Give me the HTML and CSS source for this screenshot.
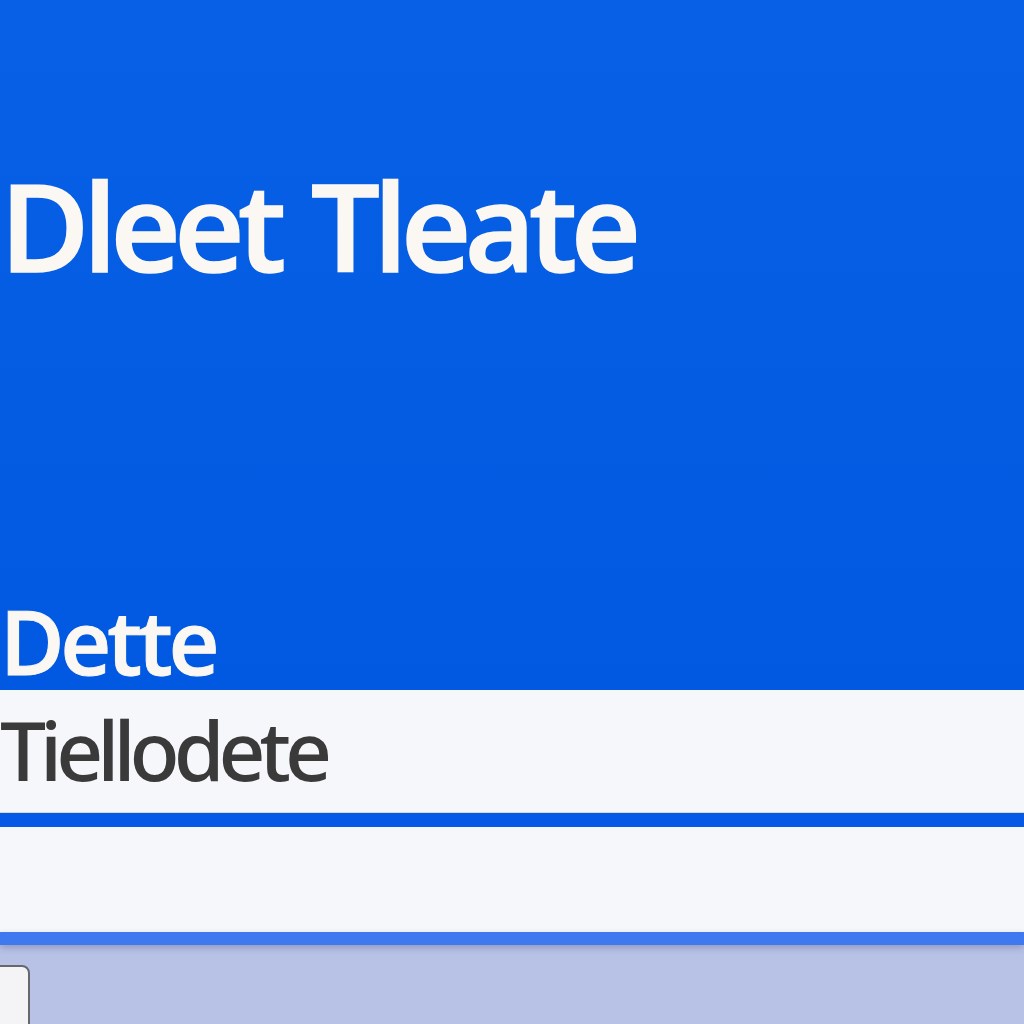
FILE: index.html
```html
<!DOCTYPE html>
<html lang="en">
<head>
  <meta charset="UTF-8" />
  <meta name="viewport" content="width=device-width, initial-scale=1" />
  <title>Dleet Tleate</title>
  <link rel="stylesheet" href="styles.css">
</head>
<body>

  <header class="hero">
    <h1 class="hero-title">Dleet Tleate</h1>
    <h2 class="hero-sub">Dette</h2>
  </header>

  <div class="field">
    <span class="field-text">Tiellodete</span>
  </div>
  <div class="divider"></div>
  <div class="field field-empty"></div>
  <div class="divider divider-light"></div>

  <div class="footer">
    <div class="footer-box"></div>
  </div>

</body>
</html>
```

FILE: styles.css
```css
body {
  font-family: 'Open Sans', 'Noto Sans', sans-serif;
  background: #b8c2e6;
  margin: 0;
  padding: 0;
  height: 1024px;
  overflow: hidden;
}

.hero {
  background: linear-gradient(to bottom, #0760e6, #0259e1);
  color: #fbf8f4;
  height: 690px;
  display: flex;
  flex-direction: column;
  box-sizing: border-box;
}

.hero-title {
  margin: 0;
  padding-top: 145px;
  font-size: 122px;
  font-weight: 600;
  line-height: 160px;
  letter-spacing: -6.5px;
  word-spacing: 6px;
  -webkit-text-stroke: 1.5px currentColor;
}

.hero-sub {
  margin: auto 0 0;
  padding-bottom: 4px;
  font-size: 88px;
  font-weight: 600;
  line-height: 90px;
  letter-spacing: -4px;
  -webkit-text-stroke: 1px currentColor;
}

.field {
  background: #f6f7fb;
  height: 123px;
  display: flex;
  align-items: center;
  border-bottom: 1px solid #d8d8dc;
  box-sizing: border-box;
}

.field-empty {
  height: 105px;
  border-bottom: none;
}

.field-text {
  font-family: 'Noto Sans', sans-serif;
  font-size: 82px;
  font-weight: 500;
  color: #3a3a3a;
  letter-spacing: -6px;
  line-height: 1;
  margin-top: -4px;
}

.divider {
  height: 14px;
  background: #0459e6;
}

.divider-light {
  height: 13px;
  background: #3f78ef;
  box-shadow: 0 3px 6px rgba(60, 70, 110, 0.3);
}

.footer {
  padding-top: 20px;
}

.footer-box {
  width: 30px;
  height: 80px;
  margin-left: -4px;
  background: #f4f4f6;
  border: 2px solid #66686e;
  border-radius: 0 8px 0 0;
}
```
